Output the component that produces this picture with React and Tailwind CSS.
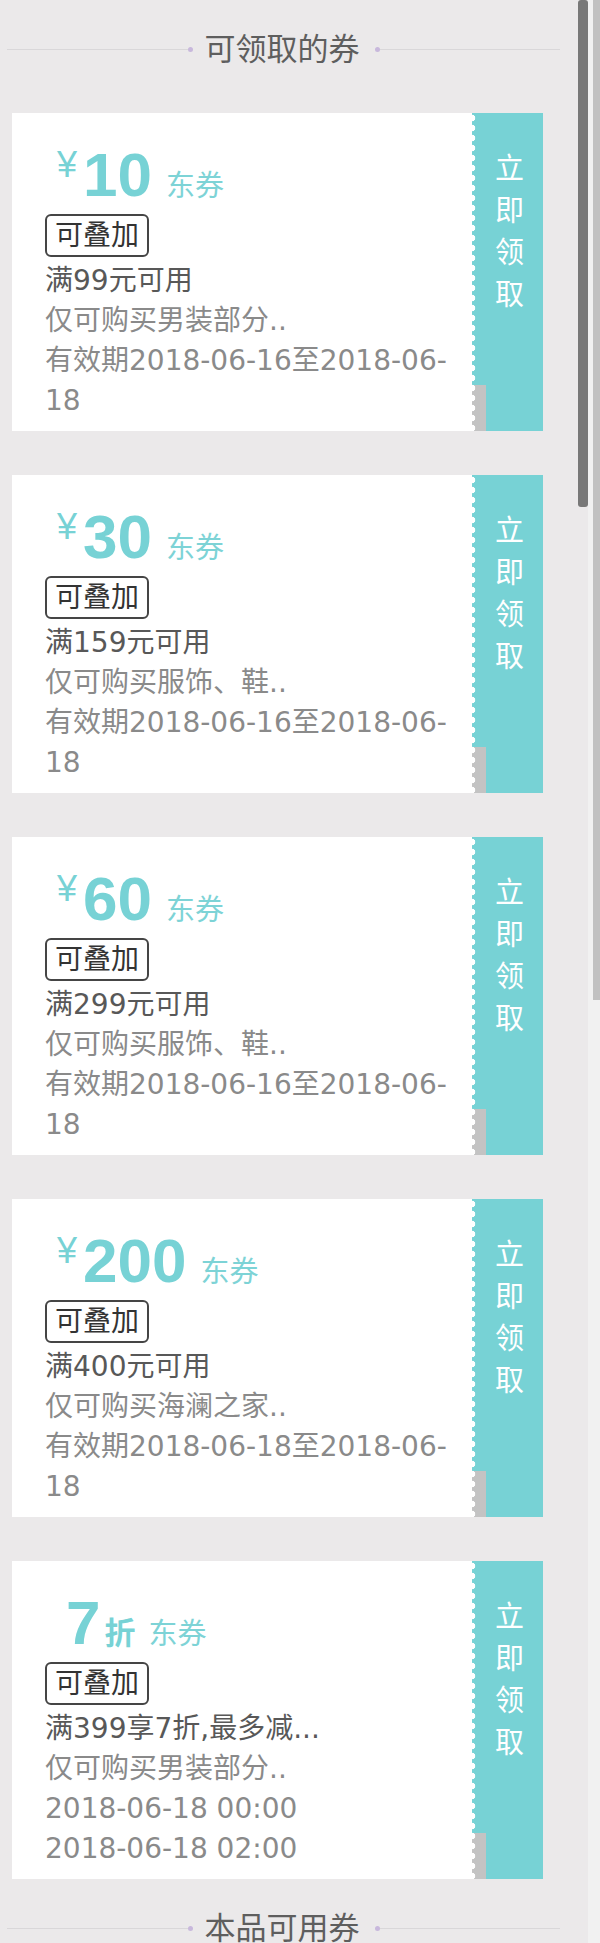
import React from 'react';

const TEAL = 'text-[#77d2d5]';

const coupons = [
    { amount: '10', cond: '满99元可用', scope: '仅可购买男装部分..', dates: ['有效期2018-06-16至2018-06-18'] },
    { amount: '30', cond: '满159元可用', scope: '仅可购买服饰、鞋..', dates: ['有效期2018-06-16至2018-06-18'] },
    { amount: '60', cond: '满299元可用', scope: '仅可购买服饰、鞋..', dates: ['有效期2018-06-16至2018-06-18'] },
    { amount: '200', cond: '满400元可用', scope: '仅可购买海澜之家..', dates: ['有效期2018-06-18至2018-06-18'] },
    { discount: '7', cond: '满399享7折,最多减...', scope: '仅可购买男装部分..', dates: ['2018-06-18 00:00', '2018-06-18 02:00'] },
];

const SectionTitle = ({ children }) => (
    <div className="ml-[7px] flex h-[98px] w-[553px] shrink-0 items-center">
        <div className="h-px flex-1 bg-[#d9d7d9]" />
        <span className="h-[5px] w-[5px] rounded-full bg-[#c8b8dc]" />
        <span className="pl-[12px] pr-[15px] text-[31px] leading-none text-[#5e5e5e]">{children}</span>
        <span className="h-[5px] w-[5px] rounded-full bg-[#c8b8dc]" />
        <div className="h-px flex-1 bg-[#d9d7d9]" />
    </div>
);

const Amount = ({ coupon }) => (
    <div className={`ml-[12px] flex items-baseline ${TEAL}`}>
        {coupon.discount ? (
            <>
                <span className="ml-[9px] font-['Liberation_Sans',sans-serif] text-[62px] font-bold leading-none">{coupon.discount}</span>
                <span className="ml-[4px] text-[31px] font-bold leading-none">折</span>
                <span className="ml-[13px] text-[29px] leading-none text-[#7dd3d6]">东券</span>
            </>
        ) : (
            <>
                <span className="mt-[3px] self-start font-['Liberation_Sans',sans-serif] text-[36px] leading-none">¥</span>
                <span className="ml-[6px] font-['Liberation_Sans',sans-serif] text-[62px] font-bold leading-none">{coupon.amount}</span>
                <span className="ml-[14px] text-[29px] leading-none text-[#7dd3d6]">东券</span>
            </>
        )}
    </div>
);

const CouponCard = ({ coupon }) => (
    <div className="ml-[12px] flex h-[318px] w-[531px] shrink-0 bg-white">
        {/* left: value and rules */}
        <div className="min-w-0 flex-1 pl-[33px] pr-[17px] pt-[31px]">
            <Amount coupon={coupon} />
            <div className="mt-[8px] w-fit rounded-[6px] border-2 border-[#454545] px-[8px] text-[28px] leading-[39px] text-[#333]">
                可叠加
            </div>
            <div className="mt-[4px] text-[28px] leading-[40px]">
                <div className="text-[#585858]">{coupon.cond}</div>
                <div className="text-[#8a8a8a]">{coupon.scope}</div>
                {coupon.dates.map((d) => (
                    <div key={d} className="break-all text-[#8a8a8a]">{d}</div>
                ))}
            </div>
        </div>

        {/* right: claim strip with torn edge */}
        <div className="relative w-[71px] shrink-0 bg-[#77d2d5] pt-[35px]">
            <div className="absolute bottom-0 left-0 h-[46px] w-[14px] bg-[#c3c3c3]" />
            <div className="absolute inset-y-0 left-0 w-[8px] bg-[radial-gradient(circle_at_0_50%,#fff_3px,transparent_3.6px)] bg-size-[8px_10px] bg-repeat-y" />
            <div className="ml-[23px] w-[29px] text-[29px] leading-[42px] text-white">立即领取</div>
        </div>
    </div>
);

const App = () => (
    <div className="flex h-[1943px] w-[600px] overflow-hidden bg-[#ebe9ea] font-['DejaVu_Sans','Noto_Sans_CJK_SC',sans-serif]">
        <div className="flex w-[578px] shrink-0 flex-col">
            <SectionTitle>可领取的券</SectionTitle>
            <div className="mt-[15px] flex flex-col gap-[44px]">
                {coupons.map((c, i) => (
                    <CouponCard key={i} coupon={c} />
                ))}
            </div>
            <SectionTitle>本品可用券</SectionTitle>
        </div>

        {/* list scrollbar */}
        <div className="w-[10px] shrink-0">
            <div className="h-[507px] rounded-[3px] bg-[#787878]" />
        </div>

        {/* window scrollbar */}
        <div className="w-[12px] shrink-0 bg-[#f1f1f1] pl-[5px]">
            <div className="h-[1000px] bg-[#c1c1c1]" />
        </div>
    </div>
);

export default App;
